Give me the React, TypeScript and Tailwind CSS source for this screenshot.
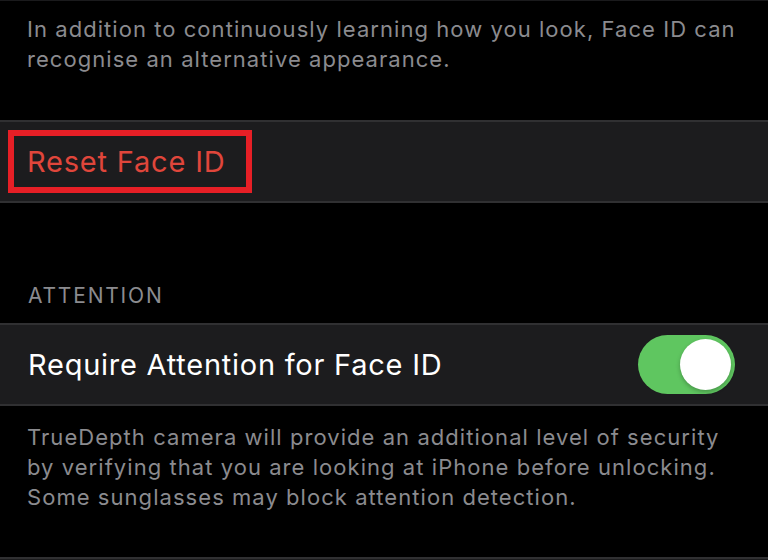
import React from 'react';

const Toggle: React.FC<{ on: boolean }> = ({ on }) => (
  <div
    className={`flex h-[59px] w-[97px] items-center rounded-full p-1 ${
      on ? 'justify-end bg-[#5fc660]' : 'justify-start bg-[#39393d]'
    }`}
  >
    <div className="h-[51px] w-[51px] rounded-full bg-white shadow-[0_2px_4px_rgba(0,0,0,0.25)]" />
  </div>
);

const Footnote: React.FC<{ children: React.ReactNode; className?: string }> = ({ children, className = '' }) => (
  <p className={`px-[27px] text-[22px] leading-[30px] tracking-[1.05px] text-[#8b8b8f] ${className}`}>{children}</p>
);

export default function App() {
  return (
    <div
      className="h-[560px] w-[768px] overflow-hidden bg-black"
      style={{ fontFamily: 'Inter, "Noto Sans", "Liberation Sans", sans-serif' }}
    >
      <div className="h-px bg-[#1a1a1c]" />

      <Footnote className="pt-[13px]">
        In addition to continuously learning how you look, Face ID can
        <br />
        recognise an alternative appearance.
      </Footnote>

      {/* reset row */}
      <div className="mt-[46px] h-[83px] border-y-2 border-[#303032] bg-[#1c1c1e] pl-[8px] pt-[8px]">
        <div className="flex h-[63px] w-[244px] items-center border-[6px] border-[#e61f26] pl-[13px]">
          <span className="text-[29px] tracking-[0.8px] text-[#e0463b]">Reset Face ID</span>
        </div>
      </div>

      <div className="px-[28px] pb-[15px] pt-[81px] text-[21px] uppercase leading-[24px] tracking-[1.8px] text-[#8b8b8f]">
        Attention
      </div>

      {/* attention row */}
      <div className="flex h-[83px] items-center justify-between border-y-2 border-[#303032] bg-[#1c1c1e] pl-[28px] pr-[33px]">
        <span className="text-[29px] tracking-[0.75px] text-white">Require Attention for Face ID</span>
        <Toggle on />
      </div>

      <Footnote className="pt-[16px]">
        TrueDepth camera will provide an additional level of security
        <br />
        by verifying that you are looking at iPhone before unlocking.
        <br />
        Some sunglasses may block attention detection.
      </Footnote>

      <div className="mt-[45px] h-[20px] border-t-2 border-[#303032] bg-[#1c1c1e]" />
    </div>
  );
}
